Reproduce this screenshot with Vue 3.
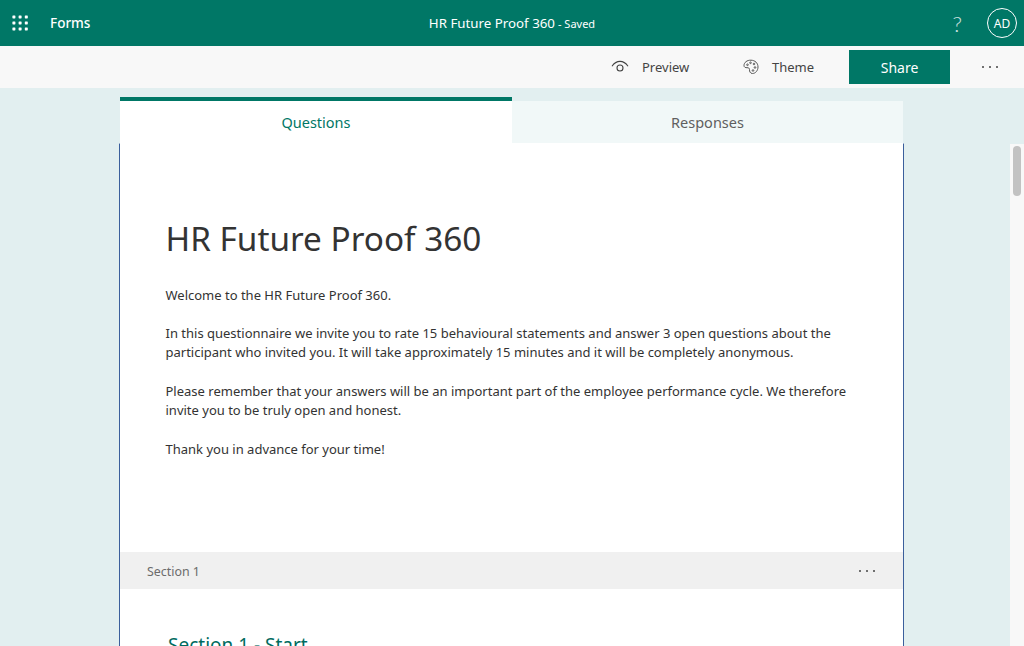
<template>
    <div class="page">
        <header class="topbar">
            <div class="topbar-left">
                <svg class="waffle" width="16" height="16" viewBox="0 0 16 16">
                    <g fill="#ffffff">
                        <rect v-for="dot in waffleDots" :key="dot.id" :x="dot.x" :y="dot.y" width="3" height="3" rx="0.6" />
                    </g>
                </svg>
                <span class="app-name">Forms</span>
            </div>
            <div class="topbar-title">
                <span class="form-name">HR Future Proof 360</span>
                <span class="saved">- Saved</span>
            </div>
            <div class="topbar-right">
                <span class="help">?</span>
                <div class="avatar">AD</div>
            </div>
        </header>

        <div class="toolbar">
            <button class="tool-btn preview-btn">
                <svg width="18" height="14" viewBox="0 0 18 14" fill="none" stroke="#444" stroke-width="1.1">
                    <path d="M1 6.2C3.5 2.6 6 1.4 9 1.4s5.500 1.200 8 4.800" />
                    <circle cx="9" cy="8" r="3" />
                </svg>
                <span>Preview</span>
            </button>
            <button class="tool-btn theme-btn">
                <svg width="16" height="16" viewBox="0 0 16 16" fill="none" stroke="#555" stroke-width="1">
                    <path d="M8 1.200C4 1 1 3.500 1 6.500c0 1.800 1.500 2.300 3 2.200 1.500-.1 2.600.5 2.500 1.900-.1 1.700.6 3.900 3 3.900 3 0 5.500-3 5.500-6.500C15 4 12 1.300 8 1.200z" />
                    <circle cx="4.500" cy="5.800" r="0.800" />
                    <circle cx="7.500" cy="3.800" r="0.800" />
                    <circle cx="11" cy="5" r="0.800" />
                    <circle cx="12" cy="8.500" r="0.800" />
                    <circle cx="10" cy="11.500" r="0.800" />
                </svg>
                <span>Theme</span>
            </button>
            <button class="share-btn">Share</button>
            <button class="more-btn">
                <i></i><i></i><i></i>
            </button>
        </div>

        <main class="workspace">
            <div class="form-column">
                <nav class="tabs">
                    <div class="tab tab-active">Questions</div>
                    <div class="tab">Responses</div>
                </nav>
                <section class="card">
                    <div class="intro">
                        <h1>HR Future Proof 360</h1>
                        <p v-for="para in paragraphs" :key="para">{{ para }}</p>
                    </div>
                    <div class="section-bar">
                        <span>Section 1</span>
                        <div class="section-more"><i></i><i></i><i></i></div>
                    </div>
                    <h2>Section 1 - Start</h2>
                </section>
            </div>
            <aside class="scrollbar">
                <div class="scroll-thumb"></div>
            </aside>
        </main>
    </div>
</template>

<script setup>
const waffleDots = [];
for (let r = 0; r < 3; r++) {
    for (let c = 0; c < 3; c++) {
        waffleDots.push({ id: r + '-' + c, x: c * 6.2 + 0.4, y: r * 6 + 0.4 });
    }
}

const paragraphs = [
    'Welcome to the HR Future Proof 360.',
    'In this questionnaire we invite you to rate 15 behavioural statements and answer 3 open questions about the participant who invited you. It will take approximately 15 minutes and it will be completely anonymous.',
    'Please remember that your answers will be an important part of the employee performance cycle. We therefore invite you to be truly open and honest.',
    'Thank you in advance for your time!',
];
</script>

<style>
html, body {
    margin: 0;
    height: 100%;
    overflow: hidden;
}
</style>

<style scoped>
.page {
    width: 1024px;
    height: 646px;
    display: flex;
    flex-direction: column;
    overflow: hidden;
    background-color: #e2eff0;
    font-family: "Noto Sans", "Open Sans", sans-serif;
    color: #333333;
}

.topbar {
    height: 46px;
    flex: none;
    display: grid;
    grid-template-columns: 1fr auto 1fr;
    align-items: center;
    background-color: #007766;
    color: #ffffff;
}

.topbar-left {
    display: flex;
    align-items: center;
    padding-left: 12px;
    gap: 22px;
}

.app-name {
    font-size: 13.5px;
    font-weight: 500;
}

.topbar-title {
    font-size: 13.3px;
    white-space: nowrap;
}

.saved {
    margin-left: 3px;
    font-size: 11px;
}

.topbar-right {
    display: flex;
    align-items: center;
    justify-content: flex-end;
    padding-right: 7px;
    gap: 25px;
}

.help {
    font-family: "Lato", sans-serif;
    font-size: 22px;
    font-weight: 300;
    opacity: 0.8;
}

.avatar {
    width: 30px;
    height: 30px;
    box-sizing: border-box;
    border: 1px solid #ffffff;
    border-radius: 50%;
    display: flex;
    justify-content: center;
    align-items: center;
    font-size: 12px;
}

.toolbar {
    height: 42px;
    flex: none;
    display: flex;
    align-items: center;
    background-color: #f8f8f8;
    padding-left: 611px;
}

.tool-btn {
    border: none;
    background: none;
    padding: 0;
    display: flex;
    align-items: center;
    font-family: inherit;
    font-size: 13px;
    color: #444444;
}

.preview-btn {
    width: 132px;
    gap: 13px;
}

.theme-btn {
    width: 106px;
    gap: 13px;
}

.share-btn {
    width: 101px;
    height: 34px;
    border: none;
    padding: 0;
    background-color: #007766;
    color: #ffffff;
    font-family: inherit;
    font-size: 14px;
}

.more-btn {
    border: none;
    background: none;
    padding: 0;
    margin-left: 32px;
    display: flex;
    gap: 5px;
}

.more-btn i,
.section-more i {
    display: block;
    width: 2px;
    height: 2px;
    border-radius: 50%;
    background-color: #444444;
}

.workspace {
    flex: 1;
    min-height: 0;
    display: flex;
    padding-left: 120px;
}

.form-column {
    width: 784px;
    padding-top: 9px;
}

.tabs {
    display: grid;
    grid-template-columns: 392px 391px;
    height: 46px;
}

.tab {
    margin-top: 4px;
    background-color: #f1f8f8;
    color: #5f5f5f;
    font-size: 14.5px;
    display: flex;
    justify-content: center;
    align-items: center;
}

.tab-active {
    margin-top: 0;
    background-color: #ffffff;
    border-top: 4px solid #007766;
    color: #007766;
}

.card {
    width: 785px;
    margin-left: -1px;
    box-sizing: border-box;
    background-color: #ffffff;
    border-top: 1px solid #ffffff;
    border-left: 1px solid #3b5f9c;
    border-right: 1px solid #3b5f9c;
    height: 520px;
}

.intro {
    height: 408px;
    box-sizing: border-box;
    padding: 71px 46px 0 45.5px;
}

h1 {
    margin: 0 0 24.500px;
    font-size: 33.3px;
    font-weight: 400;
    line-height: 46px;
    color: #333333;
}

p {
    margin: 0 0 19.250px;
    font-size: 13px;
    line-height: 19.250px;
    color: #333333;
}

.section-bar {
    height: 37px;
    box-sizing: border-box;
    padding: 1px 28px 0 27px;
    background-color: #f0f0f0;
    display: flex;
    align-items: center;
    justify-content: space-between;
    font-size: 12.4px;
    color: #6b6b6b;
}

.section-more {
    display: flex;
    gap: 5px;
}

h2 {
    margin: 43px 0 0 48px;
    font-size: 19px;
    font-weight: 400;
    color: #006b5e;
}

.scrollbar {
    width: 14px;
    margin-left: auto;
    margin-top: 56px;
    background-color: #f8f8f8;
    box-sizing: border-box;
    padding: 2px 3px;
}

.scroll-thumb {
    width: 8px;
    height: 50px;
    border-radius: 4px;
    background-color: #c2c2c2;
}
</style>
